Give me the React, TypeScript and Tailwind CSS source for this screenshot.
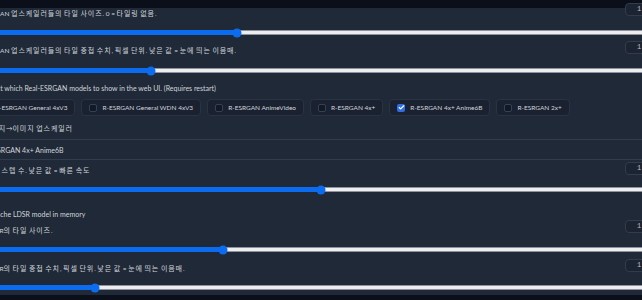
import { Check } from 'lucide-react';

const FONT = 'font-["Lato","Noto_Sans_CJK_KR",sans-serif]';

const MODELS = [
  { name: 'R-ESRGAN General 4xV3', checked: false },
  { name: 'R-ESRGAN General WDN 4xV3', checked: false },
  { name: 'R-ESRGAN AnimeVideo', checked: false },
  { name: 'R-ESRGAN 4x+', checked: false },
  { name: 'R-ESRGAN 4x+ Anime6B', checked: true },
  { name: 'R-ESRGAN 2x+', checked: false },
];

// Hangul runs: slightly loose tracking, like the original page
function Ko({ text }: { text: string }) {
  const parts = text.split(/([\uAC00-\uD7A3\u3131-\u318E]+)/);
  return (
    <>
      {parts.map((p, i) =>
        i % 2 === 1 ? (
          <span key={i} className="text-[7px] tracking-[0.9px]">
            {p}
          </span>
        ) : (
          <span key={i}>{p}</span>
        ),
      )}
    </>
  );
}

// value = thumb position in px from the left edge of the content column
function Track({ value }: { value: number }) {
  return (
    <div className="relative h-[5px] w-full border-y border-[#8d949f] bg-[#ededed]">
      <div className="absolute -top-px left-0 h-[5px] bg-[#0b6cf0]" style={{ width: value }} />
      <div
        className="absolute top-1/2 h-[9px] w-[9px] -translate-x-1/2 -translate-y-1/2 rounded-full bg-[#0b6cf0]"
        style={{ left: value }}
      />
    </div>
  );
}

function NumBox({ className = '' }: { className?: string }) {
  return (
    <div
      className={`h-[13px] w-[47px] shrink-0 rounded-[4px] border border-[#323c4b] bg-[#1c2432] pl-[11px] font-['Liberation_Mono',monospace] text-[7px] leading-[11px] text-[#b4bccb] ${className}`}
    >
      1
    </div>
  );
}

function Header({ label, boxClass }: { label: string; boxClass: string }) {
  return (
    <div className="flex h-[10px] items-start justify-between">
      <span className="whitespace-nowrap text-[6.5px] leading-[10px]">
        <Ko text={label} />
      </span>
      <NumBox className={boxClass} />
    </div>
  );
}

function Chip({ name, checked }: { name: string; checked: boolean }) {
  return (
    <div className="flex h-[17px] shrink-0 items-center gap-[5px] rounded-[4px] border border-[#2a3342] bg-[#1a2130] pl-[7px] pr-[7px]">
      {checked ? (
        <span className="flex h-[8px] w-[8px] items-center justify-center rounded-[2px] bg-[#2f6fe4]">
          <Check className="h-[7px] w-[7px] text-white" strokeWidth={4} />
        </span>
      ) : (
        <span className="h-[8px] w-[8px] rounded-[2px] border border-[#374151] bg-[#111827]" />
      )}
      <span className="whitespace-nowrap text-[6.5px] leading-[10px]">{name}</span>
    </div>
  );
}

export default function App() {
  return (
    <div className={`h-[300px] w-[642px] overflow-hidden bg-[#0b0f19] ${FONT} text-[#d1d5db]`}>
      <div className="h-[8px]" />
      <div className="h-[287px] bg-[#1f2937]">
        <div className="-ml-[16px] flex w-[688px] flex-col">
          {/* ESRGAN tile */}
          <Header label="ESRGAN 업스케일러들의 타일 사이즈. 0 = 타일링 없음." boxClass="-mt-[5px]" />
          <div className="mt-[12px]">
            <Track value={253} />
          </div>
          <div className="mt-[10px]">
            <Header label="ESRGAN 업스케일러들의 타일 중첩 수치, 픽셀 단위. 낮은 값 = 눈에 띄는 이음매." boxClass="-mt-[4px]" />
          </div>
          <div className="mt-[13px]">
            <Track value={167} />
          </div>

          {/* Real-ESRGAN models */}
          <div className="mt-[10px] h-[10px] whitespace-nowrap text-[7px] leading-[10px]">
            Select which Real-ESRGAN models to show in the web UI. (Requires restart)
          </div>
          <div className="-ml-[10px] mt-[6px] flex gap-[6px]">
            {MODELS.map((m) => (
              <Chip key={m.name} name={m.name} checked={m.checked} />
            ))}
          </div>

          {/* img2img upscaler */}
          <div className="mt-[7px] h-[10px] whitespace-nowrap text-[6.5px] leading-[10px]">
            <Ko text="이미지→이미지 업스케일러" />
          </div>
          <div className="mt-[6px] flex h-[21px] items-center border-y border-[#323c4b] pl-[2px] text-[7px] leading-[10px]">
            R-ESRGAN 4x+ Anime6B
          </div>

          {/* LDSR */}
          <div className="mt-[5px]">
            <Header label="LDSR 스텝 수. 낮은 값 = 빠른 속도" boxClass="-mt-[3px]" />
          </div>
          <div className="mt-[12px]">
            <Track value={337} />
          </div>
          <div className="-ml-[5px] mt-[17px] flex h-[10px] items-center gap-[5px]">
            <span className="h-[8px] w-[8px] rounded-[2px] border border-[#374151] bg-[#111827]" />
            <span className="whitespace-nowrap text-[7px] leading-[10px]">Cache LDSR model in memory</span>
          </div>

          {/* SwinIR */}
          <div className="mt-[6px]">
            <Header label="SwinIR의 타일 사이즈." boxClass="-mt-[5px]" />
          </div>
          <div className="mt-[12px]">
            <Track value={239} />
          </div>
          <div className="mt-[11px]">
            <Header label="SwinIR의 타일 중첩 수치, 픽셀 단위. 낮은 값 = 눈에 띄는 이음매." boxClass="-mt-[4px]" />
          </div>
          <div className="mt-[12px]">
            <Track value={111} />
          </div>
        </div>
      </div>
    </div>
  );
}
